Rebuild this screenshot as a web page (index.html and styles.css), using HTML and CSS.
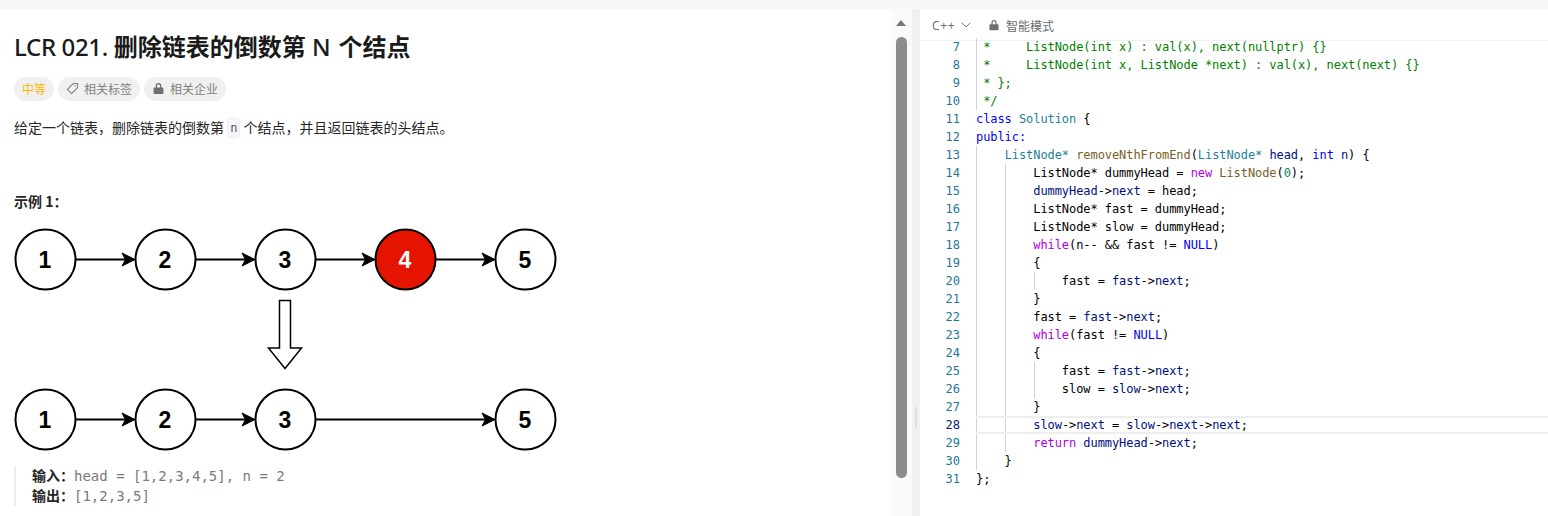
FILE: index.html
```html
<!DOCTYPE html>
<html lang="zh-CN">
<head>
<meta charset="utf-8">
<title>LCR 021</title>
<link rel="stylesheet" href="styles.css">
</head>
<body>
<div class="app">
  <section class="desc-panel">
    <div class="desc">
      <h1 class="title"><span class="lat">LCR 021. </span>删除链表的倒数第 <span class="lat-n">N</span> 个结点</h1>
      <div class="tags">
        <span class="tag tag-medium">中等</span>
        <span class="tag">
          <svg class="tag-icon" viewBox="0 0 14 14"><path d="M8 1.500h4.500v4.500L6 12.500 1.500 8Z" fill="none" stroke="#7a7a7a" stroke-width="1.100" stroke-linejoin="round"/><circle cx="10" cy="4" r=".8" fill="#7a7a7a"/></svg>
          相关标签
        </span>
        <span class="tag">
          <svg class="tag-icon" viewBox="0 0 14 14"><path d="M2.500 6h9a.8.8 0 0 1 .8.8v5.400a.8.8 0 0 1-.8.8h-9a.8.8 0 0 1-.8-.8V6.800a.8.8 0 0 1 .8-.8ZM4 6V4.200a3 3 0 0 1 6 0V6H8.600V4.200a1.600 1.600 0 0 0-3.200 0V6Z" fill="#6f6f6f"/></svg>
          相关企业
        </span>
      </div>
      <p class="para">给定一个链表&#xFF0C;删除链表的倒数第 <code class="inline-code">n</code> 个结点&#xFF0C;并且返回链表的头结点&#x3002;</p>
      <p class="example-title">示例 1&#xFF1A;</p>
      <svg class="diagram" viewBox="14 228 544 224" width="544" height="224">
        <g class="links">
          <path d="M76 259.500H127M196 259.500H247M316 259.500H367M436 259.500H487M76 419.500H127M196 419.500H247M316 419.500H487"/>
        </g>
        <g class="heads">
          <path d="M135 259.500 122 253 125.500 259.500 122 266Z"/>
          <path d="M255 259.500 242 253 245.500 259.500 242 266Z"/>
          <path d="M375 259.500 362 253 365.500 259.500 362 266Z"/>
          <path d="M495 259.500 482 253 485.500 259.500 482 266Z"/>
          <path d="M135 419.500 122 413 125.500 419.500 122 426Z"/>
          <path d="M255 419.500 242 413 245.500 419.500 242 426Z"/>
          <path d="M495 419.500 482 413 485.500 419.500 482 426Z"/>
        </g>
        <g class="nodes">
          <circle cx="45.500" cy="259.500" r="30"/>
          <circle cx="165.500" cy="259.500" r="30"/>
          <circle cx="285.500" cy="259.500" r="30"/>
          <circle class="node-red" cx="405.500" cy="259.500" r="30"/>
          <circle cx="525.500" cy="259.500" r="30"/>
          <circle cx="45.500" cy="419.500" r="30"/>
          <circle cx="165.500" cy="419.500" r="30"/>
          <circle cx="285.500" cy="419.500" r="30"/>
          <circle cx="525.500" cy="419.500" r="30"/>
        </g>
        <path class="big-arrow" d="M279.500 300.500H290.500V348H301.500L285 368.500 268.500 348H279.500Z"/>
        <g class="labels">
          <text x="45" y="267.500">1</text>
          <text x="165" y="267.500">2</text>
          <text x="285" y="267.500">3</text>
          <text class="label-white" x="405" y="267.500">4</text>
          <text x="525" y="267.500">5</text>
          <text x="45" y="427.500">1</text>
          <text x="165" y="427.500">2</text>
          <text x="285" y="427.500">3</text>
          <text x="525" y="427.500">5</text>
        </g>
      </svg>
      <blockquote class="io">
        <div><strong>输入&#xFF1A;</strong><span class="mono">head = [1,2,3,4,5], n = 2</span></div>
        <div><strong>输出&#xFF1A;</strong><span class="mono">[1,2,3,5]</span></div>
      </blockquote>
    </div>
    <div class="scrollbar">
      <span class="scroll-up"></span>
      <span class="scroll-thumb"></span>
    </div>
  </section>
  <div class="gutter"><span class="grip"></span></div>
  <section class="editor">
    <header class="toolbar">
      <span class="lang">C++</span>
      <svg class="chev" viewBox="0 0 10 6"><path d="M.7.7 5 5 9.300.7" fill="none" stroke="#777" stroke-width="1"/></svg>
      <svg class="lock" viewBox="0 0 14 14"><path d="M2.500 6h9a.8.8 0 0 1 .8.8v5.400a.8.8 0 0 1-.8.8h-9a.8.8 0 0 1-.8-.8V6.800a.8.8 0 0 1 .8-.8ZM4 6V4.200a3 3 0 0 1 6 0V6H8.600V4.200a1.600 1.600 0 0 0-3.200 0V6Z" fill="#6f6f6f"/></svg>
      <span class="mode">智能模式</span>
    </header>
    <div class="code">
      <div class="ln g1"><i>7</i><pre><span class="c"> *     ListNode(int x) : val(x), next(nullptr) {}</span></pre></div>
      <div class="ln g1"><i>8</i><pre><span class="c"> *     ListNode(int x, ListNode *next) : val(x), next(next) {}</span></pre></div>
      <div class="ln g1"><i>9</i><pre><span class="c"> * };</span></pre></div>
      <div class="ln g1"><i>10</i><pre><span class="c"> */</span></pre></div>
      <div class="ln"><i>11</i><pre><span class="k">class</span> <span class="t">Solution</span> {</pre></div>
      <div class="ln"><i>12</i><pre><span class="k">public:</span></pre></div>
      <div class="ln g1"><i>13</i><pre>    <span class="t">ListNode*</span> <span class="f">removeNthFromEnd</span>(<span class="t">ListNode*</span> <span class="v">head</span>, <span class="k">int</span> <span class="v">n</span>) {</pre></div>
      <div class="ln g2"><i>14</i><pre>        ListNode* dummyHead = <span class="m">new</span> <span class="f">ListNode</span>(<span class="n">0</span>);</pre></div>
      <div class="ln g2"><i>15</i><pre>        <span class="v">dummyHead</span>-&gt;<span class="v">next</span> = head;</pre></div>
      <div class="ln g2"><i>16</i><pre>        ListNode* fast = dummyHead;</pre></div>
      <div class="ln g2"><i>17</i><pre>        ListNode* slow = dummyHead;</pre></div>
      <div class="ln g2"><i>18</i><pre>        <span class="m">while</span>(n-- &amp;&amp; fast != <span class="k">NULL</span>)</pre></div>
      <div class="ln g2"><i>19</i><pre>        {</pre></div>
      <div class="ln g3"><i>20</i><pre>            fast = <span class="v">fast</span>-&gt;<span class="v">next</span>;</pre></div>
      <div class="ln g2"><i>21</i><pre>        }</pre></div>
      <div class="ln g2"><i>22</i><pre>        fast = <span class="v">fast</span>-&gt;<span class="v">next</span>;</pre></div>
      <div class="ln g2"><i>23</i><pre>        <span class="m">while</span>(fast != <span class="k">NULL</span>)</pre></div>
      <div class="ln g2"><i>24</i><pre>        {</pre></div>
      <div class="ln g3"><i>25</i><pre>            fast = <span class="v">fast</span>-&gt;<span class="v">next</span>;</pre></div>
      <div class="ln g3"><i>26</i><pre>            slow = <span class="v">slow</span>-&gt;<span class="v">next</span>;</pre></div>
      <div class="ln g2"><i>27</i><pre>        }</pre></div>
      <div class="ln g2 active"><i>28</i><pre>        <span class="v">slow</span>-&gt;<span class="v">next</span> = <span class="v">slow</span>-&gt;<span class="v">next</span>-&gt;<span class="v">next</span>;</pre></div>
      <div class="ln g2"><i>29</i><pre>        <span class="m">return</span> <span class="v">dummyHead</span>-&gt;<span class="v">next</span>;</pre></div>
      <div class="ln g1"><i>30</i><pre>    }</pre></div>
      <div class="ln"><i>31</i><pre>};</pre></div>
    </div>
  </section>
</div>
</body>
</html>
```
FILE: styles.css
```css
* { box-sizing: border-box; }
html, body { margin: 0; height: 100%; overflow: hidden; }
body {
  background: #f7f7f8;
  font-family: "Open Sans", "Noto Sans CJK SC", sans-serif;
  color: #262626;
}
.app { display: flex; height: 516px; padding-top: 9px; }

.desc-panel { width: 912px; display: flex; background: #fff; }
.desc { width: 892px; padding: 24px 14px 0; overflow: hidden; }
.title {
  margin: 0;
  font-size: 24px;
  line-height: 28px;
  font-weight: 700;
  color: #1a1a1a;
  font-family: "Noto Sans", "Noto Sans CJK SC", sans-serif;
  white-space: pre-wrap;
}
.lat { font-weight: 500; letter-spacing: -0.35px; }
.lat-n { font-weight: 500; letter-spacing: 1.5px; }
.tags { display: flex; gap: 4px; margin-top: 16px; }
.tag {
  display: flex;
  align-items: center;
  gap: 5px;
  height: 24px;
  padding: 0 8px 2px;
  border-radius: 12px;
  background: #f0f0f0;
  color: #7f7f7f;
  font-size: 12px;
  font-family: "Noto Sans CJK SC", sans-serif;
}
.tag-medium { color: #ffb800; }
.tag-icon { width: 13px; height: 13px; }
.para {
  margin: 16px 0 0;
  height: 20px;
  font-size: 14px;
  line-height: 20px;
  color: #262626;
  font-family: "Noto Sans CJK SC", sans-serif;
}
.inline-code {
  display: inline-block;
  height: 20px;
  padding: 0 2px;
  font-family: "DejaVu Sans Mono", monospace;
  font-size: 12px;
  line-height: 19px;
  color: #4a5568;
  background: #f7f7f8;
  border: 1px solid #eeeeee;
  border-radius: 4px;
  vertical-align: top;
  margin-top: 1px;
}
.example-title {
  margin: 54px 0 0;
  font-size: 14px;
  line-height: 20px;
  font-weight: 700;
  color: #262626;
  font-family: "Noto Sans CJK SC", sans-serif;
}
.diagram { display: block; margin-top: 17px; margin-bottom: -2px; }
.links path { fill: none; stroke: #000; stroke-width: 2; }
.heads path { fill: #000; stroke: #000; stroke-width: 1; }
.nodes circle { fill: #fff; stroke: #000; stroke-width: 2; }
.nodes .node-red { fill: #e51400; }
.big-arrow { fill: #fff; stroke: #000; stroke-width: 1.500; }
.labels text {
  font-family: "Liberation Sans", sans-serif;
  font-size: 23px;
  font-weight: 700;
  text-anchor: middle;
  fill: #000;
}
.labels .label-white { fill: #fff; }
.io {
  margin: 16px 0 0;
  padding-left: 16px;
  border-left: 2px solid #eeeeee;
  font-size: 14px;
  line-height: 18px;
  font-family: "Noto Sans CJK SC", sans-serif;
}
.io div { height: 20px; }
.io strong { font-weight: 700; color: #262626; }
.mono { font-family: "DejaVu Sans Mono", monospace; font-size: 14px; color: #7a7a7a; }

.scrollbar {
  width: 20px;
  background: #fafafa;
  padding-left: 4px;
  display: flex;
  flex-direction: column;
}
.scroll-up {
  width: 0;
  height: 0;
  margin: 11px 0 0 0;
  border-left: 5.500px solid transparent;
  border-right: 5.500px solid transparent;
  border-bottom: 6px solid #777;
}
.scroll-thumb {
  width: 11px;
  height: 441px;
  margin-top: 11px;
  background: #8c8c8c;
  border-radius: 6px;
}

.gutter { width: 8px; background: #f0f0f0; position: relative; }
.grip {
  position: absolute;
  left: 3px;
  top: 398px;
  width: 2px;
  height: 20px;
  background: #dcdcdc;
}

.editor { flex: 1; min-width: 0; background: #fff; display: flex; flex-direction: column; overflow: hidden; }
.toolbar {
  height: 32px;
  flex: none;
  display: flex;
  align-items: center;
  padding-left: 12px;
  padding-top: 1px;
  border-bottom: 1px solid #f0f0f0;
  font-size: 12px;
  color: #6b6b6b;
  font-family: "Noto Sans CJK SC", sans-serif;
}
.lang { font-family: "Open Sans", sans-serif; width: 29px; letter-spacing: 0.7px; }
.chev { width: 10px; height: 6px; }
.lock { width: 12px; height: 12px; margin-left: 17px; }
.mode { margin-left: 6px; }

.code {
  flex: 1;
  margin-top: -3px;
  overflow: hidden;
  font-family: "DejaVu Sans Mono", monospace;
  font-size: 12px;
  line-height: 18px;
  color: #000;
}
.ln { display: flex; height: 18px; position: relative; }
.ln i {
  flex: none;
  width: 40px;
  text-align: right;
  font-style: normal;
  color: #237893;
}
.ln pre {
  flex: 1;
  margin: 0 0 0 16px;
  font: inherit;
  letter-spacing: -0.07px;
  white-space: pre;
  background-repeat: no-repeat;
  background-size: 1px 100%;
}
.g1 pre { background-image: linear-gradient(#d3d3d3, #d3d3d3); background-position: 0 0; }
.g2 pre {
  background-image: linear-gradient(#d3d3d3, #d3d3d3), linear-gradient(#d3d3d3, #d3d3d3);
  background-position: 0 0, 29px 0;
}
.g3 pre {
  background-image: linear-gradient(#d3d3d3, #d3d3d3), linear-gradient(#d3d3d3, #d3d3d3), linear-gradient(#d3d3d3, #d3d3d3);
  background-position: 0 0, 29px 0, 58px 0;
}
.active pre { box-shadow: inset 0 2px #eeeeee, inset 0 -2px #eeeeee; }
.active i { color: #0b216f; }
.c { color: #008000; }
.k { color: #0000ff; }
.t { color: #267f99; }
.f { color: #795e26; }
.v { color: #001080; }
.m { color: #af00db; }
.n { color: #098658; }
```
